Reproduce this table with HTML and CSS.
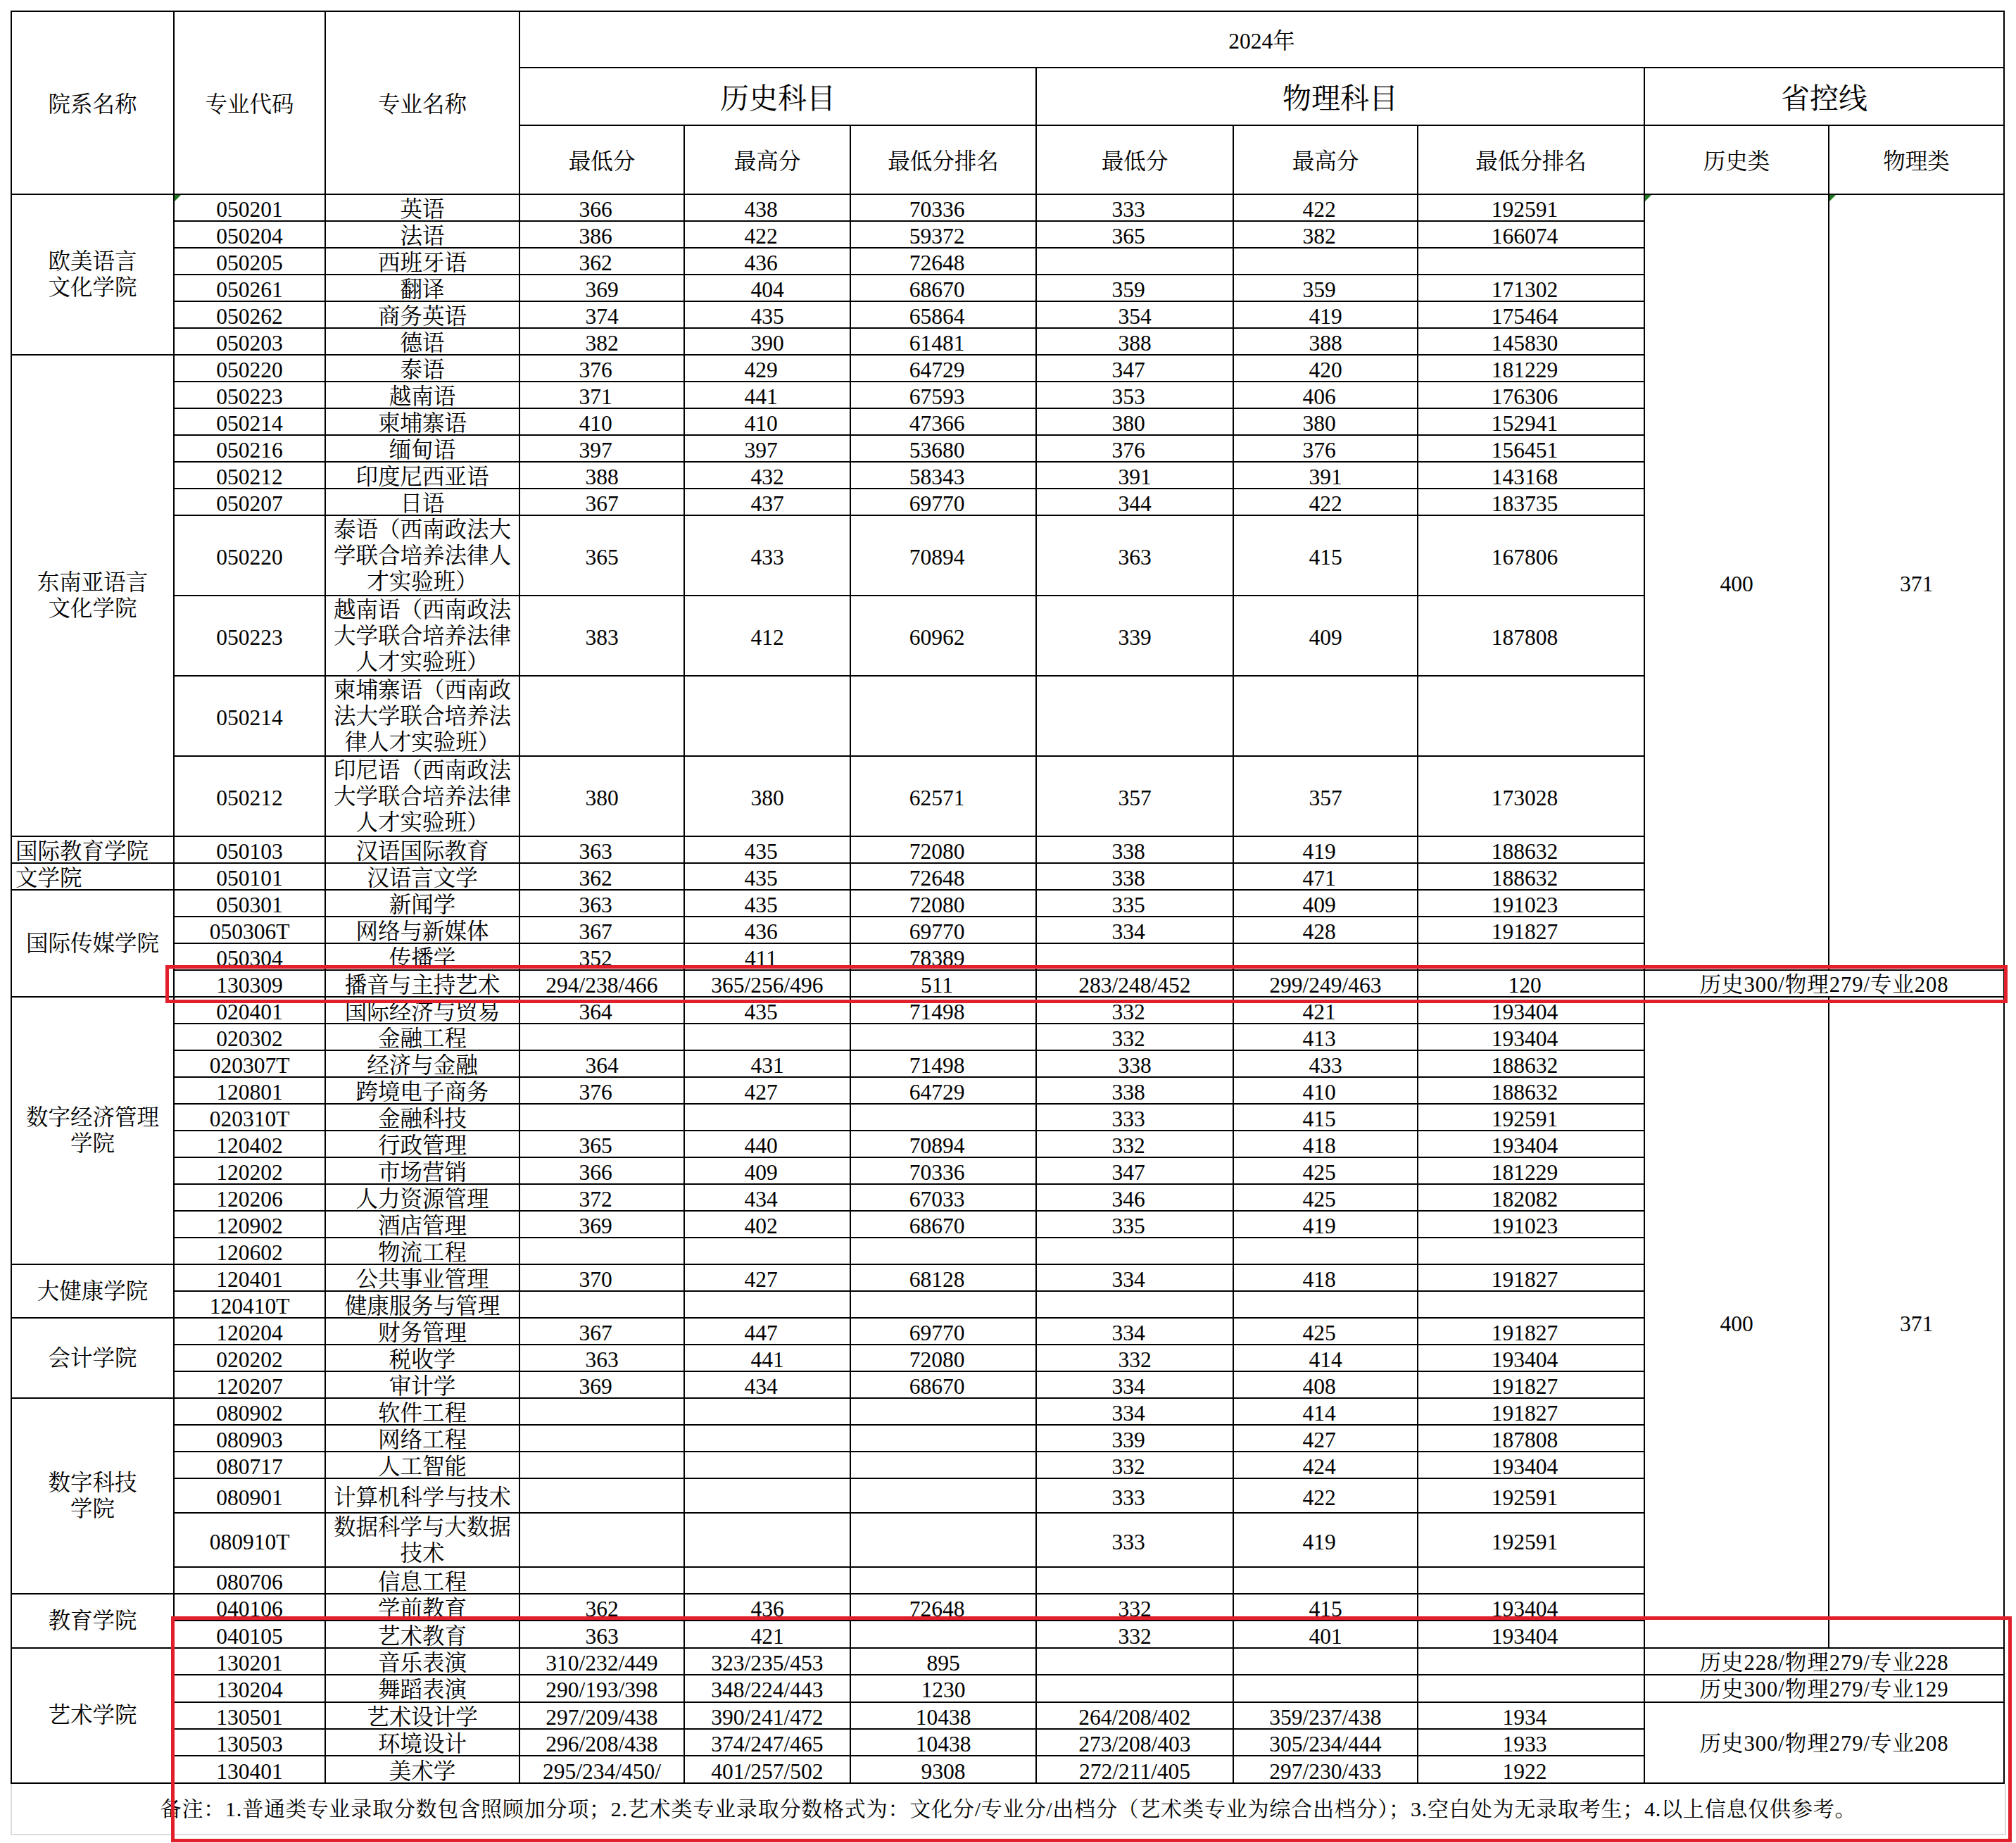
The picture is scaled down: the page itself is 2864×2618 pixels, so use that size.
FILE: index.html
```html
<!DOCTYPE html>
<html lang="zh-CN">
<head>
<meta charset="utf-8">
<title>2024年录取分数</title>
<link rel="stylesheet" href="styles.css">
</head>
<body>
<div class="page">
<table class="sheet">
<colgroup>
<col class="c1"><col class="c2"><col class="c3"><col class="c4"><col class="c5"><col class="c6"><col class="c7"><col class="c8"><col class="c9"><col class="c10"><col class="c11">
</colgroup>
<thead>
<tr class="h1"><th rowspan="3">院系名称</th><th rowspan="3">专业代码</th><th rowspan="3">专业名称</th><th colspan="8">2024年</th></tr>
<tr class="h2"><th colspan="3" class="big">历史科目</th><th colspan="3" class="big">物理科目</th><th colspan="2" class="big">省控线</th></tr>
<tr class="h3"><th>最低分</th><th>最高分</th><th>最低分排名</th><th>最低分</th><th>最高分</th><th>最低分排名</th><th>历史类</th><th>物理类</th></tr>
</thead>
<tbody>
<tr><td rowspan="6" class="dept">欧美语言<br>文化学院</td><td class="tri">050201</td><td class="nm">英语</td><td>366</td><td>438</td><td>70336</td><td>333</td><td>422</td><td>192591</td><td rowspan="21" class="tri pc">400</td><td rowspan="21" class="tri pc">371</td></tr>
<tr><td>050204</td><td class="nm">法语</td><td>386</td><td>422</td><td>59372</td><td>365</td><td>382</td><td>166074</td></tr>
<tr><td>050205</td><td class="nm">西班牙语</td><td>362</td><td>436</td><td>72648</td><td></td><td></td><td></td></tr>
<tr><td>050261</td><td class="nm">翻译</td><td class="s">369</td><td class="s">404</td><td>68670</td><td>359</td><td>359</td><td>171302</td></tr>
<tr><td>050262</td><td class="nm">商务英语</td><td class="s">374</td><td class="s">435</td><td>65864</td><td class="s">354</td><td class="s">419</td><td>175464</td></tr>
<tr><td>050203</td><td class="nm">德语</td><td class="s">382</td><td class="s">390</td><td>61481</td><td class="s">388</td><td class="s">388</td><td>145830</td></tr>
<tr><td rowspan="10" class="dept">东南亚语言<br>文化学院</td><td>050220</td><td class="nm">泰语</td><td>376</td><td>429</td><td>64729</td><td>347</td><td class="s">420</td><td>181229</td></tr>
<tr><td>050223</td><td class="nm">越南语</td><td>371</td><td>441</td><td>67593</td><td>353</td><td>406</td><td>176306</td></tr>
<tr><td>050214</td><td class="nm">柬埔寨语</td><td>410</td><td>410</td><td>47366</td><td>380</td><td>380</td><td>152941</td></tr>
<tr><td>050216</td><td class="nm">缅甸语</td><td>397</td><td>397</td><td>53680</td><td>376</td><td>376</td><td>156451</td></tr>
<tr><td>050212</td><td class="nm">印度尼西亚语</td><td class="s">388</td><td class="s">432</td><td>58343</td><td class="s">391</td><td class="s">391</td><td>143168</td></tr>
<tr><td>050207</td><td class="nm">日语</td><td class="s">367</td><td class="s">437</td><td>69770</td><td class="s">344</td><td class="s">422</td><td>183735</td></tr>
<tr class="tall"><td>050220</td><td class="nm wrap">泰语（西南政法大学联合培养法律人才实验班）</td><td class="s">365</td><td class="s">433</td><td>70894</td><td class="s">363</td><td class="s">415</td><td>167806</td></tr>
<tr class="tall"><td>050223</td><td class="nm wrap">越南语（西南政法大学联合培养法律人才实验班）</td><td class="s">383</td><td class="s">412</td><td>60962</td><td class="s">339</td><td class="s">409</td><td>187808</td></tr>
<tr class="tall"><td>050214</td><td class="nm wrap">柬埔寨语（西南政法大学联合培养法律人才实验班）</td><td></td><td></td><td></td><td></td><td></td><td></td></tr>
<tr class="tall"><td>050212</td><td class="nm wrap">印尼语（西南政法大学联合培养法律人才实验班）</td><td class="s">380</td><td class="s">380</td><td>62571</td><td class="s">357</td><td class="s">357</td><td>173028</td></tr>
<tr><td class="l">国际教育学院</td><td>050103</td><td class="nm">汉语国际教育</td><td>363</td><td>435</td><td>72080</td><td>338</td><td>419</td><td>188632</td></tr>
<tr><td class="l">文学院</td><td>050101</td><td class="nm">汉语言文学</td><td>362</td><td>435</td><td>72648</td><td>338</td><td>471</td><td>188632</td></tr>
<tr><td rowspan="4" class="dept">国际传媒学院</td><td>050301</td><td class="nm">新闻学</td><td>363</td><td>435</td><td>72080</td><td>335</td><td>409</td><td>191023</td></tr>
<tr><td>050306T</td><td class="nm">网络与新媒体</td><td>367</td><td>436</td><td>69770</td><td>334</td><td>428</td><td>191827</td></tr>
<tr><td>050304</td><td class="nm">传播学</td><td>352</td><td>411</td><td>78389</td><td></td><td></td><td></td></tr>
<tr><td>130309</td><td class="nm">播音与主持艺术</td><td class="c">294/238/466</td><td class="c">365/256/496</td><td>511</td><td class="c">283/248/452</td><td class="c">299/249/463</td><td>120</td><td colspan="2" class="ctl">历史300/物理279/专业208</td></tr>
<tr><td rowspan="10" class="dept">数字经济管理<br>学院</td><td>020401</td><td class="nm">国际经济与贸易</td><td>364</td><td>435</td><td>71498</td><td>332</td><td>421</td><td>193404</td><td rowspan="23" class="pc">400</td><td rowspan="23" class="pc">371</td></tr>
<tr><td>020302</td><td class="nm">金融工程</td><td></td><td></td><td></td><td>332</td><td>413</td><td>193404</td></tr>
<tr><td>020307T</td><td class="nm">经济与金融</td><td class="s">364</td><td class="s">431</td><td>71498</td><td class="s">338</td><td class="s">433</td><td>188632</td></tr>
<tr><td>120801</td><td class="nm">跨境电子商务</td><td>376</td><td>427</td><td>64729</td><td>338</td><td>410</td><td>188632</td></tr>
<tr><td>020310T</td><td class="nm">金融科技</td><td></td><td></td><td></td><td>333</td><td>415</td><td>192591</td></tr>
<tr><td>120402</td><td class="nm">行政管理</td><td>365</td><td>440</td><td>70894</td><td>332</td><td>418</td><td>193404</td></tr>
<tr><td>120202</td><td class="nm">市场营销</td><td>366</td><td>409</td><td>70336</td><td>347</td><td>425</td><td>181229</td></tr>
<tr><td>120206</td><td class="nm">人力资源管理</td><td>372</td><td>434</td><td>67033</td><td>346</td><td>425</td><td>182082</td></tr>
<tr><td>120902</td><td class="nm">酒店管理</td><td>369</td><td>402</td><td>68670</td><td>335</td><td>419</td><td>191023</td></tr>
<tr><td>120602</td><td class="nm">物流工程</td><td></td><td></td><td></td><td></td><td></td><td></td></tr>
<tr><td rowspan="2" class="dept">大健康学院</td><td>120401</td><td class="nm">公共事业管理</td><td>370</td><td>427</td><td>68128</td><td>334</td><td>418</td><td>191827</td></tr>
<tr><td>120410T</td><td class="nm">健康服务与管理</td><td></td><td></td><td></td><td></td><td></td><td></td></tr>
<tr><td rowspan="3" class="dept">会计学院</td><td>120204</td><td class="nm">财务管理</td><td>367</td><td>447</td><td>69770</td><td>334</td><td>425</td><td>191827</td></tr>
<tr><td>020202</td><td class="nm">税收学</td><td class="s">363</td><td class="s">441</td><td>72080</td><td class="s">332</td><td class="s">414</td><td>193404</td></tr>
<tr><td>120207</td><td class="nm">审计学</td><td>369</td><td>434</td><td>68670</td><td>334</td><td>408</td><td>191827</td></tr>
<tr><td rowspan="6" class="dept">数字科技<br>学院</td><td>080902</td><td class="nm">软件工程</td><td></td><td></td><td></td><td>334</td><td>414</td><td>191827</td></tr>
<tr><td>080903</td><td class="nm">网络工程</td><td></td><td></td><td></td><td>339</td><td>427</td><td>187808</td></tr>
<tr><td>080717</td><td class="nm">人工智能</td><td></td><td></td><td></td><td>332</td><td>424</td><td>193404</td></tr>
<tr class="r49"><td>080901</td><td class="nm">计算机科学与技术</td><td></td><td></td><td></td><td>333</td><td>422</td><td>192591</td></tr>
<tr class="r77"><td>080910T</td><td class="nm wrap">数据科学与大数据技术</td><td></td><td></td><td></td><td>333</td><td>419</td><td>192591</td></tr>
<tr><td>080706</td><td class="nm">信息工程</td><td></td><td></td><td></td><td></td><td></td><td></td></tr>
<tr class="r38"><td rowspan="2" class="dept">教育学院</td><td>040106</td><td class="nm">学前教育</td><td class="s">362</td><td class="s">436</td><td>72648</td><td class="s">332</td><td class="s">415</td><td>193404</td></tr>
<tr class="r38"><td>040105</td><td class="nm">艺术教育</td><td class="s">363</td><td class="s">421</td><td></td><td class="s">332</td><td class="s">401</td><td>193404</td></tr>
<tr class="r38"><td rowspan="5" class="dept">艺术学院</td><td>130201</td><td class="nm">音乐表演</td><td class="c">310/232/449</td><td class="c">323/235/453</td><td class="c">895</td><td></td><td></td><td></td><td colspan="2" class="ctl">历史228/物理279/专业228</td></tr>
<tr class="r38"><td>130204</td><td class="nm">舞蹈表演</td><td class="c">290/193/398</td><td class="c">348/224/443</td><td class="c">1230</td><td></td><td></td><td></td><td colspan="2" class="ctl">历史300/物理279/专业129</td></tr>
<tr class="r38"><td>130501</td><td class="nm">艺术设计学</td><td class="c">297/209/438</td><td class="c">390/241/472</td><td class="c">10438</td><td class="c">264/208/402</td><td class="c">359/237/438</td><td>1934</td><td rowspan="3" colspan="2" class="ctl">历史300/物理279/专业208</td></tr>
<tr class="r38"><td>130503</td><td class="nm">环境设计</td><td class="c">296/208/438</td><td class="c">374/247/465</td><td class="c">10438</td><td class="c">273/208/403</td><td class="c">305/234/444</td><td>1933</td></tr>
<tr class="r38"><td>130401</td><td class="nm">美术学</td><td class="c">295/234/450/</td><td class="c">401/257/502</td><td class="c">9308</td><td class="c">272/211/405</td><td class="c">297/230/433</td><td>1922</td></tr>
</tbody>
</table>
<div class="note">备注：1.普通类专业录取分数包含照顾加分项；2.艺术类专业录取分数格式为：文化分/专业分/出档分（艺术类专业为综合出档分）；3.空白处为无录取考生；4.以上信息仅供参考。</div>
<div class="mark m1"></div>
<div class="mark m2"></div>
</div>
</body>
</html>
```

FILE: styles.css
```css
* { box-sizing: border-box; }
body { margin: 0; background: #fff; }
.page {
  position: relative;
  width: 2864px;
  height: 2618px;
  padding: 15px 0 0 15px;
  overflow: hidden;
}
.sheet {
  border-collapse: collapse;
  table-layout: fixed;
  width: 2833px;
  font-family: "Liberation Serif", "Noto Serif CJK SC", "Noto Sans CJK SC", serif;
  font-size: 31.5px;
  color: #000;
}
.c1 { width: 231px; }
.c2 { width: 215px; }
.c3 { width: 276px; }
.c4 { width: 234px; }
.c5 { width: 236px; }
.c6 { width: 264px; }
.c7 { width: 280px; }
.c8 { width: 262px; }
.c9 { width: 322px; }
.c10 { width: 262px; }
.c11 { width: 249px; }
.sheet th, .sheet td {
  border: 2px solid #000;
  padding: 5px 4px 0;
  text-align: center;
  vertical-align: middle;
  line-height: 31px;
  font-weight: normal;
  overflow: hidden;
  white-space: nowrap;
}
.sheet th { line-height: 37px; }
.sheet .dept { line-height: 37px; padding-top: 0; }
.sheet .wrap { white-space: normal; line-height: 37px; padding-top: 0; }
.sheet .l { text-align: left; padding-left: 5px; }
/* number cells sit slightly left of centre, as in the sheet */
.sheet .nm ~ td { padding-left: 4px; padding-right: 22px; }
.sheet .nm ~ td.s,
.sheet .nm ~ td.c,
.sheet .nm ~ td.ctl,
.sheet .nm ~ td.pc { padding-left: 4px; padding-right: 4px; }
.sheet .big { font-size: 41px; line-height: 48px; }
.sheet .ctl { font-size: 30.5px; letter-spacing: 1px; }
.h1 { height: 80px; }
.h2 { height: 82px; }
.h3 { height: 98px; }
.sheet tbody tr { height: 38px; }
.sheet tbody tr.tall { height: 114px; }
.sheet tbody tr.r49 { height: 49px; }
.sheet tbody tr.r77 { height: 77px; }
.sheet tbody tr.r38 { height: 38.4px; }
.tri { position: relative; }
.tri::before {
  content: "";
  position: absolute;
  left: 0;
  top: 0;
  border-top: 9px solid #1f7a1f;
  border-right: 9px solid transparent;
}
.note {
  width: 2835px;
  height: 73px;
  border: 2px solid #dcdcdc;
  border-top: 0;
  font-family: "Liberation Serif", "Noto Serif CJK SC", "Noto Sans CJK SC", serif;
  font-size: 30px;
  letter-spacing: 0.8px;
  line-height: 71px;
  text-align: center;
  white-space: nowrap;
  color: #000;
}
.mark {
  position: absolute;
  border: 5px solid #e2202b;
}
.m1 { left: 235px; top: 1371px; width: 2617px; height: 54px; }
.m2 { left: 243px; top: 2296px; width: 2615px; height: 321px; }
```
